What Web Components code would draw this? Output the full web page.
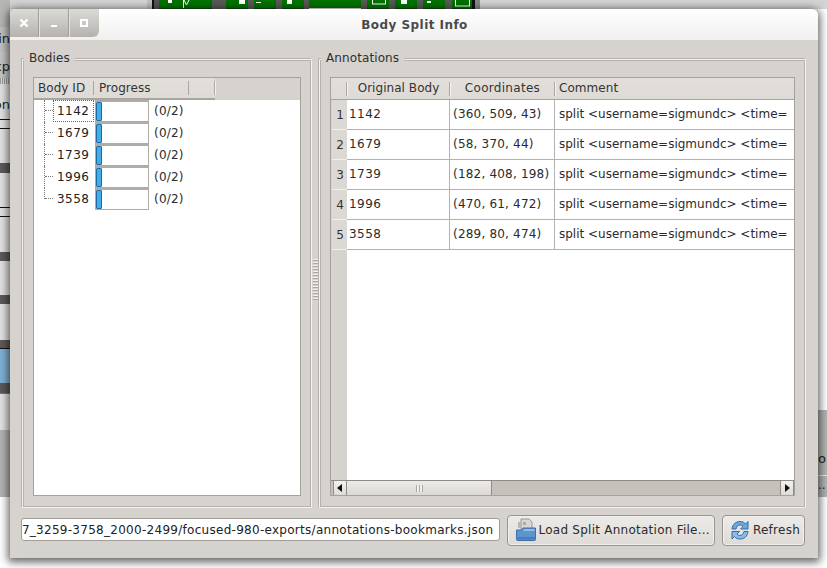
<!DOCTYPE html>
<html>
<head>
<meta charset="utf-8">
<title>Body Split Info</title>
<style>
  html, body { margin: 0; padding: 0; width: 827px; height: 568px; overflow: hidden; background: #fff; }
  body { position: relative; font: 12px/14px "DejaVu Sans", sans-serif; color: #2b2b2b; }
</style>
</head>
<body>
<desk-backdrop></desk-backdrop>
<app-window heading="Body Split Info">
  <main-split>
    <group-box slot="left" label="Bodies" shift="-9"><body-tree></body-tree></group-box>
    <group-box slot="right" label="Annotations" shift="-9"><annot-table></annot-table></group-box>
  </main-split>
  <bottom-row>
    <path-field value="7_3259-3758_2000-2499/focused-980-exports/annotations-bookmarks.json"></path-field>
    <tool-button icon="folder" label="Load Split Annotation File..."></tool-button>
    <tool-button icon="refresh" label="Refresh"></tool-button>
  </bottom-row>
</app-window>

<script>
const bodies = [
  { id: '1142', coords: '(360, 509, 43)' },
  { id: '1679', coords: '(58, 370, 44)' },
  { id: '1739', coords: '(182, 408, 198)' },
  { id: '1996', coords: '(470, 61, 472)' },
  { id: '3558', coords: '(289, 80, 474)' },
];

const header_bg = 'linear-gradient(#e2dfdb, #dedad6)';

// the other windows, seen around the dialog
class DeskBackdrop extends HTMLElement {
  constructor() {
    super();
    this.attachShadow({ mode: 'open' });
    this.shadowRoot.innerHTML = /*html*/ `
    <style>
      :host { position: absolute; inset: 0; display: block; overflow: hidden; background: #fff; }
      .top { position: absolute; left: 0; top: 0; right: 0; height: 9px; background: #d4d4d4; display: flex; padding-left: 147px; }
      .top i { display: block; height: 9px; background: #5a5a58; }
      .top i.g { background: #007400; border-bottom: 1px solid #0a4a0a; height: 8px; }
      .marks { position: absolute; left: 0; top: 0; }
      .left { position: absolute; left: 0; top: 0; width: 10px; height: 497px; background: #e2e2e2; display: flex; flex-direction: column; overflow: hidden; }
      .left div { flex: none; white-space: nowrap; }
      .txt { text-align: right; direction: rtl; color: #222; font-size: 13px; }
      .right { position: absolute; left: 818px; top: 410px; width: 9px; height: 87px; background: #b4b4b2; overflow: hidden; color: #222; }
      .right div { position: absolute; left: 0; white-space: nowrap; }
    </style>
    <div class="top">
      <i style="width:5px;background:#c0c0c0"></i><i style="width:2px;background:#111"></i><i style="width:5px;background:#555"></i>
      <i class="g" style="width:53px"></i><i style="width:14px"></i>
      <i class="g" style="width:22px"></i><i style="width:6px"></i>
      <i class="g" style="width:22px"></i><i style="width:6px"></i>
      <i class="g" style="width:22px"></i><i style="width:5px"></i>
      <i class="g" style="width:52px;border-bottom-color:#eee"></i><i style="width:6px"></i>
      <i class="g" style="width:22px"></i><i style="width:6px"></i>
      <i class="g" style="width:22px"></i><i style="width:6px"></i>
      <i class="g" style="width:22px"></i><i style="width:7px"></i>
      <i class="g" style="width:20px"></i><i style="width:3px;background:#111"></i><i style="width:5px;background:#8a8a8a"></i>
    </div>
    <svg class="marks" width="827" height="9" fill="#fff">
      <rect x="168" y="0" width="4" height="3"/>
      <path d="M184 0l2.500 5 2.500-5" fill="none" stroke="#fff"/>
      <rect x="183" y="0" width="1" height="8"/>
      <rect x="239" y="0" width="6" height="4"/>
      <rect x="256" y="2" width="5" height="1"/>
      <rect x="287" y="0" width="5" height="4"/>
      <rect x="372.500" y="-1" width="13" height="5" fill="none" stroke="#fff"/>
      <rect x="401" y="0" width="6" height="4"/>
      <rect x="427" y="1" width="4" height="2"/>
      <rect x="455.500" y="-1" width="14" height="7" fill="none" stroke="#fff"/>
    </svg>
    <div class="left">
      <div style="height:27px;background:#b5b5b3"></div>
      <div class="txt" style="height:25px;line-height:24px;background:#c0c0be">in</div>
      <div class="txt" style="height:26px;line-height:30px;background:#c4c4c2">xp</div>
      <div style="height:6px;background:repeating-linear-gradient(90deg,#999 0 1px,#ddd 1px 2px)"></div>
      <div class="txt" style="height:35px;line-height:42px">on</div>
      <div style="height:1px;background:#111"></div>
      <div style="height:8px"></div>
      <div style="height:1px;background:#111"></div>
      <div style="height:34px"></div>
      <div style="height:10px;background:#5d5a57"></div>
      <div style="height:34px"></div>
      <div style="height:1px;background:#111"></div>
      <div style="height:8px"></div>
      <div style="height:1px;background:#111"></div>
      <div style="height:35px"></div>
      <div style="height:9px;background:#5d5a57"></div>
      <div style="height:34px"></div>
      <div style="height:9px;background:#5d5a57"></div>
      <div style="height:36px"></div>
      <div style="height:8px;background:#5d5a57"></div>
      <div style="height:1px;background:#111"></div>
      <div style="height:34px;background:#7fb2d6"></div>
      <div style="height:10px;background:#5d5a57"></div>
      <div style="height:1px;background:#3a86c4"></div>
      <div style="height:36px"></div>
      <div style="height:67px;background:#b4b4b2"></div>
    </div>
    <div class="right">
      <div style="top:42px;font-size:13px">o</div>
      <div style="top:65px;width:9px;height:1px;background:#eee"></div>
      <div style="top:68px">..</div>
    </div>`;
  }
}

class AppWindow extends HTMLElement {
  constructor() {
    super();
    this.attachShadow({ mode: 'open' });
    this.shadowRoot.innerHTML = /*html*/ `
    <style>
      :host {
        position: absolute; left: 10px; top: 9px; width: 808px; height: 549px;
        display: flex; flex-direction: column;
        background: #d6d2ce; border-radius: 6px 6px 0 0;
        box-shadow: 0 2px 9px 2px rgba(0,0,0,.62);
      }
      header { flex: none; height: 31px; position: relative; display: flex; justify-content: center; align-items: center;
        background: linear-gradient(#ffffff, #f1f0ef); border-radius: 6px 6px 0 0; }
      h1 { margin: 0; font: bold 12px/14px "DejaVu Sans", sans-serif; letter-spacing: .45px; color: #4a4a4a; padding-bottom: 0; padding-left: 1px; }
      .btns { position: absolute; left: 0; top: 0; height: 28px; display: flex; overflow: hidden;
        border-radius: 6px 0 6px 0; background: linear-gradient(#dcdad7, #b5b2ae); }
      .btns span { width: 29px; box-sizing: content-box; padding-right: 0; display: flex; align-items: center; justify-content: center; border-right: 1px solid #e4e2e0; box-shadow: inset -1px 0 0 #a09d99; }
      .btns span svg { margin-right: 2px; }
      .btns span:last-child { border-right: 0; box-shadow: none; }
      section { flex: 1; min-height: 0; display: flex; flex-direction: column; padding: 12px 12px 12px 11px; gap: 7px; }
    </style>
    <header>
      <div class="btns">
        <span><svg width="12" height="12" viewBox="0 0 12 12"><path d="M2.500 2.500 9.500 9.500M9.500 2.500 2.500 9.500" stroke="#fff" stroke-width="2.400" fill="none"/></svg></span>
        <span><svg width="10" height="10" viewBox="0 0 10 10"><rect x="2" y="7" width="6" height="2" fill="#fff"/></svg></span>
        <span><svg width="10" height="10" viewBox="0 0 10 10"><path d="M1 1h8v8H1z M3 3v4h4V3z" fill="#fff" fill-rule="evenodd"/></svg></span>
      </div>
      <h1 id="t"></h1>
    </header>
    <section><slot></slot></section>`;
    this.shadowRoot.querySelector('#t').textContent = this.getAttribute('heading');
  }
}

class MainSplit extends HTMLElement {
  constructor() {
    super();
    this.attachShadow({ mode: 'open' });
    this.shadowRoot.innerHTML = /*html*/ `
    <style>
      :host { flex: 1; min-height: 0; display: grid; grid-template-columns: 290px 7px 1fr; margin-left: 1px; }
      .handle { display: flex; align-items: center; justify-content: center; }
      .handle i { display: block; width: 6px; height: 42px; margin-left: 0;
        background: repeating-linear-gradient(#f2f0ee 0 1px, #aaa6a1 1px 2px, #d6d2ce 2px 3px); }
    </style>
    <slot name="left"></slot>
    <div class="handle"><i></i></div>
    <slot name="right"></slot>`;
  }
}

class GroupBox extends HTMLElement {
  constructor() {
    super();
    this.attachShadow({ mode: 'open' });
    this.shadowRoot.innerHTML = /*html*/ `
    <style>
      :host { display: flex; min-width: 0; min-height: 0; }
      fieldset { flex: 1; min-width: 0; margin: 0; padding: 11px 10px 11px 10px; display: flex;
        border: 1px solid #f4f2f0; box-shadow: 0 0 0 1px #b5b1ac inset, -1px -1px 0 #b5b1ac; border-radius: 1px; }
      legend { padding: 0 5px 1px; font: 12px/13px "DejaVu Sans", sans-serif; color: #2f2f2f; background: #d6d2ce; letter-spacing: .1px; }
      ::slotted(*) { flex: 1; min-width: 0; }
    </style>
    <fieldset><legend id="l"></legend><slot></slot></fieldset>`;
    const legend = this.shadowRoot.querySelector('#l');
    legend.textContent = this.getAttribute('label');
    legend.style.marginLeft = this.getAttribute('shift') + 'px';
  }
}

class BodyTree extends HTMLElement {
  constructor() {
    super();
    this.attachShadow({ mode: 'open' });
    const rows = bodies.map((b, i) => /*html*/ `
      <div class="row ${i == 0 ? 'cur' : ''} ${i == bodies.length - 1 ? 'last' : ''}">
        <div class="guide"><i></i></div>
        <div class="id">${b.id}</div>
        <div class="bar"><i></i></div>
        <div class="count">(0/2)</div>
      </div>`).join('');
    this.shadowRoot.innerHTML = /*html*/ `
    <style>
      :host { display: flex; flex-direction: column; border: 1px solid #a5a19c; background: #fff; }
      .head { flex: none; height: 22px; display: flex; background: #d6d2ce; }
      .head div { height: 22px; line-height: 21px; box-sizing: border-box; background: ${header_bg}; border-bottom: 2px solid #a8a49f; color: #333; position: relative; letter-spacing: .05px; }
      .head div::after { content: ''; position: absolute; right: 0; top: 3px; height: 14px; width: 1px; background: #aaa6a1; box-shadow: 1px 0 0 #f4f2f0; }
      .c1 { width: 60px; padding-left: 4px; }
      .c2 { width: 95px; padding-left: 5px; }
      .c3 { width: 26px; }
      .list { flex: 1; }
      .row { height: 22px; display: flex; align-items: stretch; }
      .guide { width: 19px; position: relative; flex: none; }
      .guide::before { content: ''; position: absolute; left: 10px; top: 0; bottom: 0; border-left: 1px dotted #777; }
      .guide i { position: absolute; left: 11px; top: 10px; width: 8px; border-top: 1px dotted #777; }
      .last .guide::before { bottom: 11px; }
      .id { width: 41px; flex: none; box-sizing: border-box; padding-left: 3px; line-height: 20px; letter-spacing: .45px; color: #222; border: 1px solid transparent; }
      .cur .id { border: 1px dotted #666; }
      .bar { width: 54px; height: 22px; box-sizing: border-box; flex: none; margin-left: 1px; background: #fff; border: 1px solid #b0aca7; border-top: 2px solid #b0aca7; padding: 0; display: flex; }
      .bar i { display: block; width: 6px; box-sizing: border-box; background: #41ade9; border: 1px solid #1e6aa5; border-radius: 1px; margin: 0 0 0 0; }
      .count { padding-left: 5px; line-height: 22px; color: #2b2b2b; letter-spacing: .2px; }
    </style>
    <div class="head"><div class="c1">Body ID</div><div class="c2">Progress</div><div class="c3"></div></div>
    <div class="list">${rows}</div>`;
  }
}

class ScrollBar extends HTMLElement {
  constructor() {
    super();
    this.attachShadow({ mode: 'open' });
    this.shadowRoot.innerHTML = /*html*/ `
    <style>
      :host { flex: none; height: 15px; display: flex; background: #c6c2bb; border-top: 1px solid #8f8b86; box-sizing: border-box; }
      .b { flex: none; width: 14px; display: flex; align-items: center; justify-content: center; background: linear-gradient(#f4f2f0, #dedad6); border: 1px solid #8f8b86; border-top: 0; border-bottom: 0; box-sizing: border-box; }
      .thumb { flex: none; width: 144px; display: flex; align-items: center; justify-content: center; background: linear-gradient(#ecebe8, #dcd8d4); border-right: 1px solid #8f8b86; }
      .grip { width: 7px; height: 7px; background: repeating-linear-gradient(90deg, #aaa6a1 0 1px, #f2f0ee 1px 3px); }
      .t { flex: 1; }
    </style>
    <div class="b" style="margin-left:2px"><svg width="6" height="8" viewBox="0 0 6 8"><path d="M5 0v8L0 4z" fill="#111"/></svg></div>
    <div class="thumb"><div class="grip"></div></div>
    <div class="t"></div>
    <div class="b"><svg width="6" height="8" viewBox="0 0 6 8"><path d="M1 0v8l5-4z" fill="#111"/></svg></div>`;
  }
}

class AnnotTable extends HTMLElement {
  constructor() {
    super();
    this.attachShadow({ mode: 'open' });
    const rows = bodies.map((b, i) => /*html*/ `
      <div class="row">
        <div class="num">${i + 1}</div>
        <div class="cell c1">${b.id}</div>
        <div class="cell c2">${b.coords}</div>
        <div class="cell c3">split &lt;username=sigmundc&gt; &lt;time=</div>
      </div>`).join('');
    this.shadowRoot.innerHTML = /*html*/ `
    <style>
      :host { display: flex; flex-direction: column; border: 1px solid #a5a19c; background: #fff; overflow: hidden; }
      .head { flex: none; height: 22px; display: grid; grid-template-columns: 16px 103px 105px 1fr; background: ${header_bg}; border-bottom: 1px solid #a8a49f; box-sizing: border-box; }
      .head div { line-height: 21px; position: relative; color: #333; text-align: center; letter-spacing: .05px; }
      .head div:not(:last-child)::after { content: ''; position: absolute; right: 0; top: 4px; height: 14px; width: 1px; background: #aaa6a1; box-shadow: 1px 0 0 #f4f2f0; }
      .head .co { letter-spacing: .3px; }
      .head .last { text-align: left; padding-left: 4px; }
      .body { flex: 1; min-height: 0; background: linear-gradient(90deg, #d6d2ce 16px, #fff 16px); }
      .row { height: 30px; display: grid; grid-template-columns: 16px 103px 105px 1fr; box-sizing: border-box; }
      .num { text-align: right; padding-right: 3px; padding-top: 2px; line-height: 26px; color: #333; background: #dcd9d5; box-shadow: inset 0 -1px 0 #f2f0ee; margin-left: 1px; }
      .cell { box-sizing: border-box; background: #fff; border-bottom: 1px solid #b5b1ac; border-right: 1px solid #b5b1ac; line-height: 29px; white-space: nowrap; overflow: hidden; color: #2b2b2b; }
      .c1 { padding-left: 2px; letter-spacing: .45px; }
      .c2 { padding-left: 3px; letter-spacing: .2px; }
      .c3 { padding-left: 4px; border-right: 0; letter-spacing: 0; }
    </style>
    <div class="head"><div></div><div>Original Body</div><div class="co">Coordinates</div><div class="last">Comment</div></div>
    <div class="body">${rows}</div>
    <scroll-bar></scroll-bar>`;
  }
}

class BottomRow extends HTMLElement {
  constructor() {
    super();
    this.attachShadow({ mode: 'open' });
    this.shadowRoot.innerHTML = /*html*/ `
    <style>
      :host { flex: none; height: 31px; display: flex; align-items: center; gap: 7px; padding-right: 1px; }
    </style>
    <slot></slot>`;
  }
}

class PathField extends HTMLElement {
  constructor() {
    super();
    this.attachShadow({ mode: 'open' });
    this.shadowRoot.innerHTML = /*html*/ `
    <style>
      :host { flex: 1; min-width: 0; height: 23px; margin-bottom: 2px; box-sizing: border-box; display: flex; justify-content: flex-end; align-items: center; overflow: hidden;
        background: #fff; border: 1px solid #a09c97; border-radius: 3px; padding: 0 5px 0 1px; white-space: nowrap; color: #222; }
      span { letter-spacing: .28px; flex: none; }
    </style>
    <span id="v"></span>`;
    this.shadowRoot.querySelector('#v').textContent = this.getAttribute('value');
  }
}

const tool_icons = {
  folder: /*html*/ `<svg width="22" height="24" viewBox="0 0 22 24">
    <path d="M6 1h8l3 3v9H6z" fill="#d9d7d4" stroke="#9c9a97" stroke-width="1"/>
    <path d="M3 4h3v6H3z" fill="#b9b7b4"/>
    <rect x="8" y="4" width="3" height="3" fill="#aaa"/>
    <path d="M1.500 12h5l1.500-2h12.500v11.500a1 1 0 0 1-1 1H2.500a1 1 0 0 1-1-1z" fill="#5f93cd" stroke="#3c6ea8" stroke-width="1"/>
    <path d="M2.500 13h5.500l1.500-2h10v2H2.500z" fill="#93bbe4"/>
    <path d="M2.500 19h17v2.500h-17z" fill="#4a7db8"/>
  </svg>`,
  refresh: /*html*/ `<svg style="margin-right:1px" width="20" height="22" viewBox="0 0 20 22">
    <path d="M2 10C2.500 5 6 2.500 10 2.500c2.500 0 4.500 1 5.500 2.500L18 2.500V10h-7.500l2.500-2.500C12 6.500 11 6 10 6 8 6 6.500 7.500 6 10z" fill="#6ea6dc" stroke="#2f6cb0" stroke-width="1" stroke-linejoin="round"/>
    <path d="M18 12.500C17.500 17.500 14 20 10 20c-2.500 0-4.500-1-5.500-2.500L2 20v-7.500h7.500L7 15c1 1 2 1.500 3 1.500 2 0 3.500-1.500 4-4z" fill="#8dbbe6" stroke="#2f6cb0" stroke-width="1" stroke-linejoin="round"/>
  </svg>`,
};

class ToolButton extends HTMLElement {
  constructor() {
    super();
    this.attachShadow({ mode: 'open' });
    this.shadowRoot.innerHTML = /*html*/ `
    <style>
      :host { flex: none; height: 31px; box-sizing: border-box; display: flex; align-items: center; gap: 2px; padding: 0 4px 2px 7px;
        background: linear-gradient(#edebe8, #dedad6); border: 1px solid #98948f; border-radius: 4px; color: #2b2b2b; box-shadow: inset 0 0 0 1px #f2f0ee; }
      svg { display: block; }
      span { letter-spacing: .25px; white-space: nowrap; }
    </style>
    ${tool_icons[this.getAttribute('icon')]}<span id="l"></span>`;
    this.shadowRoot.querySelector('#l').textContent = this.getAttribute('label');
  }
}

window.customElements.define('desk-backdrop', DeskBackdrop);
window.customElements.define('app-window', AppWindow);
window.customElements.define('main-split', MainSplit);
window.customElements.define('group-box', GroupBox);
window.customElements.define('scroll-bar', ScrollBar);
window.customElements.define('body-tree', BodyTree);
window.customElements.define('annot-table', AnnotTable);
window.customElements.define('bottom-row', BottomRow);
window.customElements.define('path-field', PathField);
window.customElements.define('tool-button', ToolButton);
</script>
</body>
</html>
